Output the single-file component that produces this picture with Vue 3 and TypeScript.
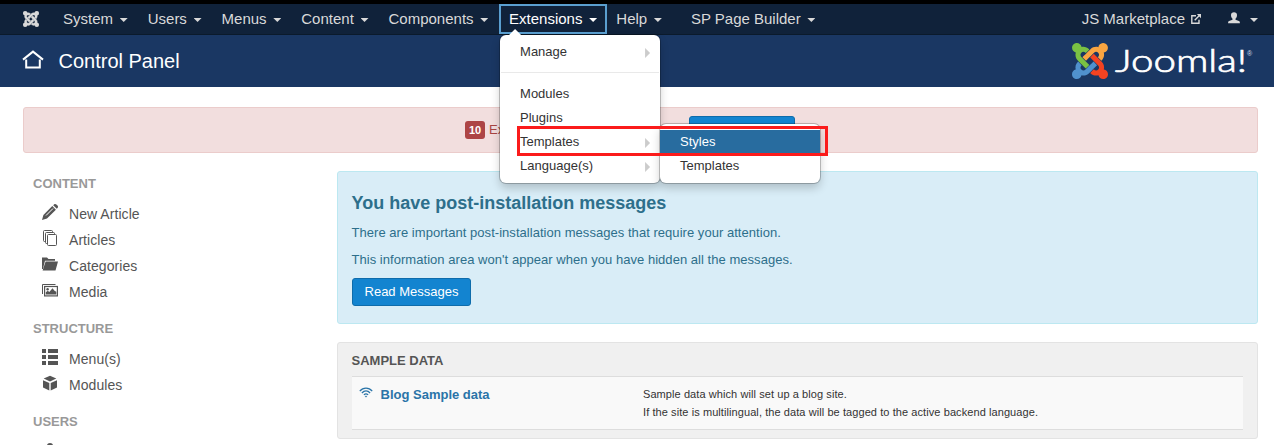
<script setup lang="ts">
interface Entry { label: string; icon: string }
interface MenuItem { label: string; sub?: boolean; divided?: boolean }

const menus: string[] = ['System', 'Users', 'Menus', 'Content', 'Components', 'Extensions', 'Help']
const dropdown: MenuItem[] = [
  { label: 'Manage', sub: true, divided: true },
  { label: 'Modules' },
  { label: 'Plugins' },
  { label: 'Templates', sub: true },
  { label: 'Language(s)', sub: true },
]
const groups: { title: string; items: Entry[] }[] = [
  {
    title: 'CONTENT',
    items: [
      { label: 'New Article', icon: 'pencil' },
      { label: 'Articles', icon: 'stack' },
      { label: 'Categories', icon: 'folder' },
      { label: 'Media', icon: 'pictures' },
    ],
  },
  {
    title: 'STRUCTURE',
    items: [
      { label: 'Menu(s)', icon: 'list' },
      { label: 'Modules', icon: 'cube' },
    ],
  },
  { title: 'USERS', items: [{ label: '', icon: 'user' }] },
]
const mark: { color: string; d: string }[] = [
  { color: '#7ac143', d: 'M.6 92.1C.6 58.8 27.4 32 60.4 32c30 0 54.5 21.9 59.2 50.2 32.6-7.6 67.1.6 96.5 30l-44.3 44.3c-20.5-20.5-42.6-16.3-55.4-3.5-14.3 14.3-14.3 37.9 0 52.2l99.5 99.5-44 44.3c-87.7-87.2-49.7-49.7-99.8-99.7-26.8-26.5-35-64.8-24.8-98.9C20.4 144.6.6 120.7.6 92.1z' },
  { color: '#f9a541', d: 'M130.1 208.5l44.3 44.3c10-10 89.7-89.7 99.7-99.8 14.3-14.3 37.6-14.3 51.9 0 12.8 12.8 17 35-3.5 55.4l44 44.3c31.2-31.2 38.5-67.6 28.9-101.2 29.2-4.1 51.9-29.2 51.9-59.5 0-33.2-26.8-60.1-59.8-60.1-30.3 0-55.4 22.5-59.5 51.6-33.8-9.9-71.7-1.5-98.3 25.1-18.3 19.1-71.1 71.5-99.6 99.9z' },
  { color: '#f44321', d: 'M396.4 360.7c8.2-32.7-.9-68.5-26.3-93.9-11.8-12.2 5 4.7-99.5-99.7l-44.3 44.3 99.7 99.7c14.3 14.3 14.3 37.6 0 51.9-12.8 12.8-35 17-55.4-3.5l-44 44.3c27.6 30.2 68 38.8 102.7 28 5.5 27.4 29.7 48.1 58.9 48.1 33 0 59.8-26.8 59.8-60.1 0-30.2-22.5-55-51.6-59.1z' },
  { color: '#5091cd', d: 'M312.1 307.6l-44-44.3c-87 86.4-50.4 50.4-99.7 99.8-14.3 14.3-37.6 14.3-51.9 0-13.1-13.4-16.9-35.3 3.2-55.4l-44-44.3c-30.2 30.2-38 65.2-29.5 98.3-26.7 6-46.2 29.9-46.2 58.2C0 453.2 26.8 480 59.8 480c28.6 0 52.5-19.8 58.6-46.7 32.7 8.2 68.5-.6 94.2-26 32.1-32 12.2-12.4 99.5-99.7z' },
]
</script>

<template>
  <div class="page">
    <nav class="navbar">
      <svg class="brand" viewBox="0 32 448 448"><path v-for="p in mark" :key="p.color" :d="p.d" /></svg>
      <ul class="menus">
        <li v-for="m in menus" :key="m" :class="{ open: m === 'Extensions' }">
          <span>{{ m }}</span><i class="caret"></i>
          <div v-if="m === 'Extensions'" class="dropdown">
            <div v-for="d in dropdown" :key="d.label" class="entry" :class="{ divided: d.divided }">
              <span>{{ d.label }}</span><i v-if="d.sub" class="arrow"></i>
              <div v-if="d.label === 'Templates'" class="submenu">
                <div class="entry active">Styles</div>
                <div class="entry">Templates</div>
              </div>
            </div>
            <div class="highlight"></div>
          </div>
        </li>
        <li class="builder"><span>SP Page Builder</span><i class="caret"></i></li>
      </ul>
      <div class="right">
        <span>JS Marketplace</span>
        <svg class="external" viewBox="0 0 10 10"><path d="M5 1.8H.8v7.4h7.2V5.8M3.7 6.3L8.4 1.600" fill="none" stroke="currentColor" stroke-width="1.4" /><path d="M5.800 0H10v4.200z" fill="currentColor" /></svg>
        <svg class="person" viewBox="0 0 12 12"><path d="M3 3C3 1 4.200.2 6 .2S9 1 9 3c0 1.700-.6 3-1.500 3.800v1l3.400 1.100c.8.4 1 .8 1 2.300H.1c0-1.500.2-1.900 1-2.300l3.400-1.100v-1C3.600 6 3 4.700 3 3z" /></svg>
        <i class="caret"></i>
      </div>
    </nav>

    <header class="header">
      <svg class="home" viewBox="0 0 22 19"><path d="M1 9.600L11 1.600l10 8M4.200 9.500v8h13.600v-8" fill="none" stroke="#fff" stroke-width="2" /></svg>
      <h1>Control Panel</h1>
      <svg class="logo" viewBox="0 0 184 38">
        <svg x="0" y="1" width="36" height="36" viewBox="0 32 448 448"><path v-for="p in mark" :key="p.color" :d="p.d" :fill="p.color" /></svg>
        <text class="word" x="43" y="30" textLength="132" lengthAdjust="spacingAndGlyphs">Joomla!</text>
        <text class="reg" x="175" y="14">®</text>
      </svg>
    </header>

    <div class="alert">
      <b>10</b><span>Ex</span><button></button>
    </div>

    <main class="columns">
      <aside>
        <section v-for="g in groups" :key="g.title">
          <h3>{{ g.title }}</h3>
          <div v-for="e in g.items" :key="e.label" class="link">
            <svg viewBox="0 0 16 16">
              <template v-if="e.icon === 'pencil'">
                <path d="M0 16l1.400-5L10.300 2.100l3.600 3.600L5 14.600zM11.200 1.200L12 .5c.8-.7 1.700-.6 2.400 0l1.100 1.100c.7.7.7 1.600 0 2.300l-.7.8z" />
                <path d="M4 11.500l7-7" stroke="#fff" stroke-width="1" />
              </template>
              <g v-else-if="e.icon === 'stack'" fill="#fff" stroke="#555" stroke-width="1">
                <rect x="1.500" y=".5" width="9" height="11" rx="1" /><rect x="3.500" y="2.500" width="9" height="11" rx="1" /><rect x="5.500" y="4.500" width="9" height="11" rx="1" />
              </g>
              <path v-else-if="e.icon === 'folder'" d="M0 13V1.500h5L6.500 3H13v1.800H3L.9 13zM3.600 5.600H16l-2.500 9H.6z" />
              <template v-else-if="e.icon === 'pictures'">
                <path d="M.5 12V2.500h13" fill="none" stroke="#555" />
                <rect x="2.600" y="4.500" width="12.800" height="9.400" fill="none" stroke="#555" stroke-width="1.200" />
                <circle cx="5.600" cy="7.300" r="1.200" /><path d="M3.800 12.600V10.300l2-1.500 1.500 1.200L10.500 6.300l2 2.500 1.800 1v2.800z" />
              </template>
              <path v-else-if="e.icon === 'list'" d="M0 0h4v4H0zM6 0h10v4H6zM0 6h4v4H0zM6 6h10v4H6zM0 12h4v4H0zM6 12h10v4H6z" />
              <path v-else-if="e.icon === 'cube'" d="M8 .8l6.300 2.800L8 6.400 1.700 3.600zM1 5.200l6.300 2.900V15.500L1 12.500zM15 5.200L8.700 8.100v7.400l6.300-3z" />
              <path v-else d="M8 1c2.200 0 3.200 1.500 3.200 3.500S9.800 9 8 9 4.800 6.500 4.800 4.500 5.800 1 8 1z" />
            </svg>
            <span>{{ e.label }}</span>
          </div>
        </section>
      </aside>

      <div class="content">
        <section class="info">
          <h2>You have post-installation messages</h2>
          <p>There are important post-installation messages that require your attention.</p>
          <p>This information area won't appear when you have hidden all the messages.</p>
          <button>Read Messages</button>
        </section>
        <section class="sample">
          <h4>SAMPLE DATA</h4>
          <div class="row">
            <svg viewBox="0 0 14 11" fill="none" stroke="#2a74a8" stroke-width="1.300"><path d="M.8 4.200C4.200.2 9.800.2 13.200 4.200M2.900 6c2.500-2.800 5.700-2.800 8.200 0M4.900 7.900c1.400-1.500 2.800-1.500 4.200 0" /><circle cx="7" cy="9.500" r=".6" fill="#2a74a8" stroke-width=".6" /></svg>
            <strong>Blog Sample data</strong>
            <p>Sample data which will set up a blog site.<br>If the site is multilingual, the data will be tagged to the active backend language.</p>
          </div>
        </section>
      </div>
    </main>
  </div>
</template>

<style>
body { background: #fff; overflow: hidden; }
</style>

<style scoped>
* { box-sizing: border-box; }
.page { width: 1274px; height: 445px; overflow: hidden; font: 13px/18px "Liberation Sans", Arial, sans-serif; color: #333; }
h1, h2, h3, h4, p, ul { margin: 0; padding: 0; }
button { font: inherit; color: #fff; background: #1384d0; border: 1px solid #0e6cab; border-radius: 3px; padding: 0; }
.navbar { height: 35px; border-top: 4px solid #000; border-bottom: 1px solid #0b1a2b; background: #10223a; display: flex; color: #d9d9d9; font-size: 15px; line-height: 30px; }
.brand { width: 16px; height: 16px; margin: 7px 14px 0 23px; fill: #d9d9d9; stroke: #d9d9d9; stroke-width: 10px; }
.menus { display: flex; list-style: none; }
.menus > li { position: relative; display: flex; align-items: center; height: 30px; padding: 0 10px; white-space: nowrap; }
.caret { width: 8px; height: 4px; margin: 2px 0 0 6.700px; background: currentColor; clip-path: polygon(0 0, 100% 0, 50% 100%); }
.menus > .open { margin: 0 -.800px 0 .800px; color: #fff; box-shadow: inset 0 0 0 2px #5a9fd0; }
.menus > .builder { margin-left: 9px; }
.right { display: flex; align-items: center; margin: 0 16px 0 auto; }
.right > span { margin-right: 1px; }
.external { width: 10px; height: 10px; margin-left: 5px; }
.person { width: 12px; height: 12px; margin-left: 27px; margin-top: -2px; fill: #d9d9d9; }
.right .caret { margin-left: 10px; }
.dropdown { position: absolute; z-index: 3; top: 31px; left: 1px; width: 160px; height: 148px; padding-top: 5px; background: #fff; border-radius: 6px; box-shadow: 0 0 0 1px rgba(0,0,0,.22), 0 5px 10px rgba(0,0,0,.2); color: #333; font-size: 13px; line-height: 24px; }
.dropdown::before { content: ""; position: absolute; left: 9px; top: -6px; width: 12px; height: 6px; background: #fff; clip-path: polygon(50% 0, 100% 100%, 0 100%); }
.entry { position: relative; height: 24px; padding: 0 10px 0 20px; display: flex; align-items: center; justify-content: space-between; }
.divided { margin-bottom: 18px; }
.divided::after { content: ""; position: absolute; left: 1px; right: 1px; bottom: -9px; height: 1px; background: #e9e9e9; }
.arrow { width: 5px; height: 10px; margin-top: 2px; background: #ccc; clip-path: polygon(0 0, 100% 50%, 0 100%); }
.submenu { position: absolute; left: 160px; top: -6px; width: 160px; height: 59px; padding-top: 6px; background: #fff; border-radius: 6px; box-shadow: 0 0 0 1px rgba(0,0,0,.22), 0 5px 10px rgba(0,0,0,.2); }
.active { background: #286c9f; color: #fff; }
.highlight { position: absolute; left: 17px; top: 91px; width: 311px; height: 30px; border: 3px solid #fb1b1b; }
.header { height: 52px; background: #1a3763; display: flex; align-items: center; padding-left: 22px; color: #fff; }
.home { width: 22px; height: 19px; margin-top: -3px; }
h1 { font-size: 20px; font-weight: 400; line-height: 24px; margin-left: 14.500px; }
.logo { width: 184px; height: 38px; margin: 0 18px 0 auto; }
.word { font: 300 31px Lato, sans-serif; fill: #fff; stroke: #fff; stroke-width: .7; }
.reg { font: 7px "Liberation Sans", sans-serif; fill: #d5ddeb; }
.alert { margin: 20px 16px 0 23px; height: 46px; border: 1px solid #ebcccb; border-radius: 3px; background: #f2dede; color: #a94442; display: flex; align-items: center; padding-left: 441px; }
.alert b { width: 20px; height: 18px; border-radius: 3px; background: #ad4445; color: #fff; font-size: 11px; text-align: center; }
.alert span { margin-left: 4px; width: 200px; white-space: nowrap; }
.alert button { width: 106px; height: 28px; }
.columns { display: flex; padding: 18px 16px 0 33px; }
aside { width: 304px; flex: none; padding-top: 4px; }
aside section { margin-bottom: 15px; }
h3 { font-size: 13px; line-height: 18px; color: #999; margin-bottom: 8px; }
.link { display: flex; align-items: center; height: 26px; font-size: 14px; color: #555; letter-spacing: .06px; }
.link svg { width: 16px; height: 16px; margin: -5px 11px 0 9px; fill: #555; }
.content { flex: 1; }
.info { height: 153px; padding: 20px 14px; background: #d9edf7; border: 1px solid #bce8f1; border-radius: 3px; color: #2d6f8b; }
h2 { font-size: 18px; line-height: 22px; margin: 0 0 10px -.500px; }
.info p { margin: 0 0 9px -.500px; letter-spacing: .04px; }
.info button { width: 119px; height: 28px; display: block; }
.sample { margin-top: 18px; height: 97px; padding: 9px 14px; background: #f0f0f0; border: 1px solid #e3e3e3; border-radius: 3px; }
h4 { font-size: 13px; line-height: 18px; color: #555; margin-left: -.500px; }
.row { margin-top: 6px; height: 54px; background: #f9f9f9; border-top: 1px solid #ddd; border-bottom: 1px solid #ddd; display: flex; padding: 9px 0 0 7px; }
.row svg { width: 14px; height: 11px; margin: 1px 7.500px 0 0; }
.row strong { width: 262.500px; color: #2a74a8; }
.row p { font-size: 11px; letter-spacing: .08px; margin-top: -1px; }
</style>
